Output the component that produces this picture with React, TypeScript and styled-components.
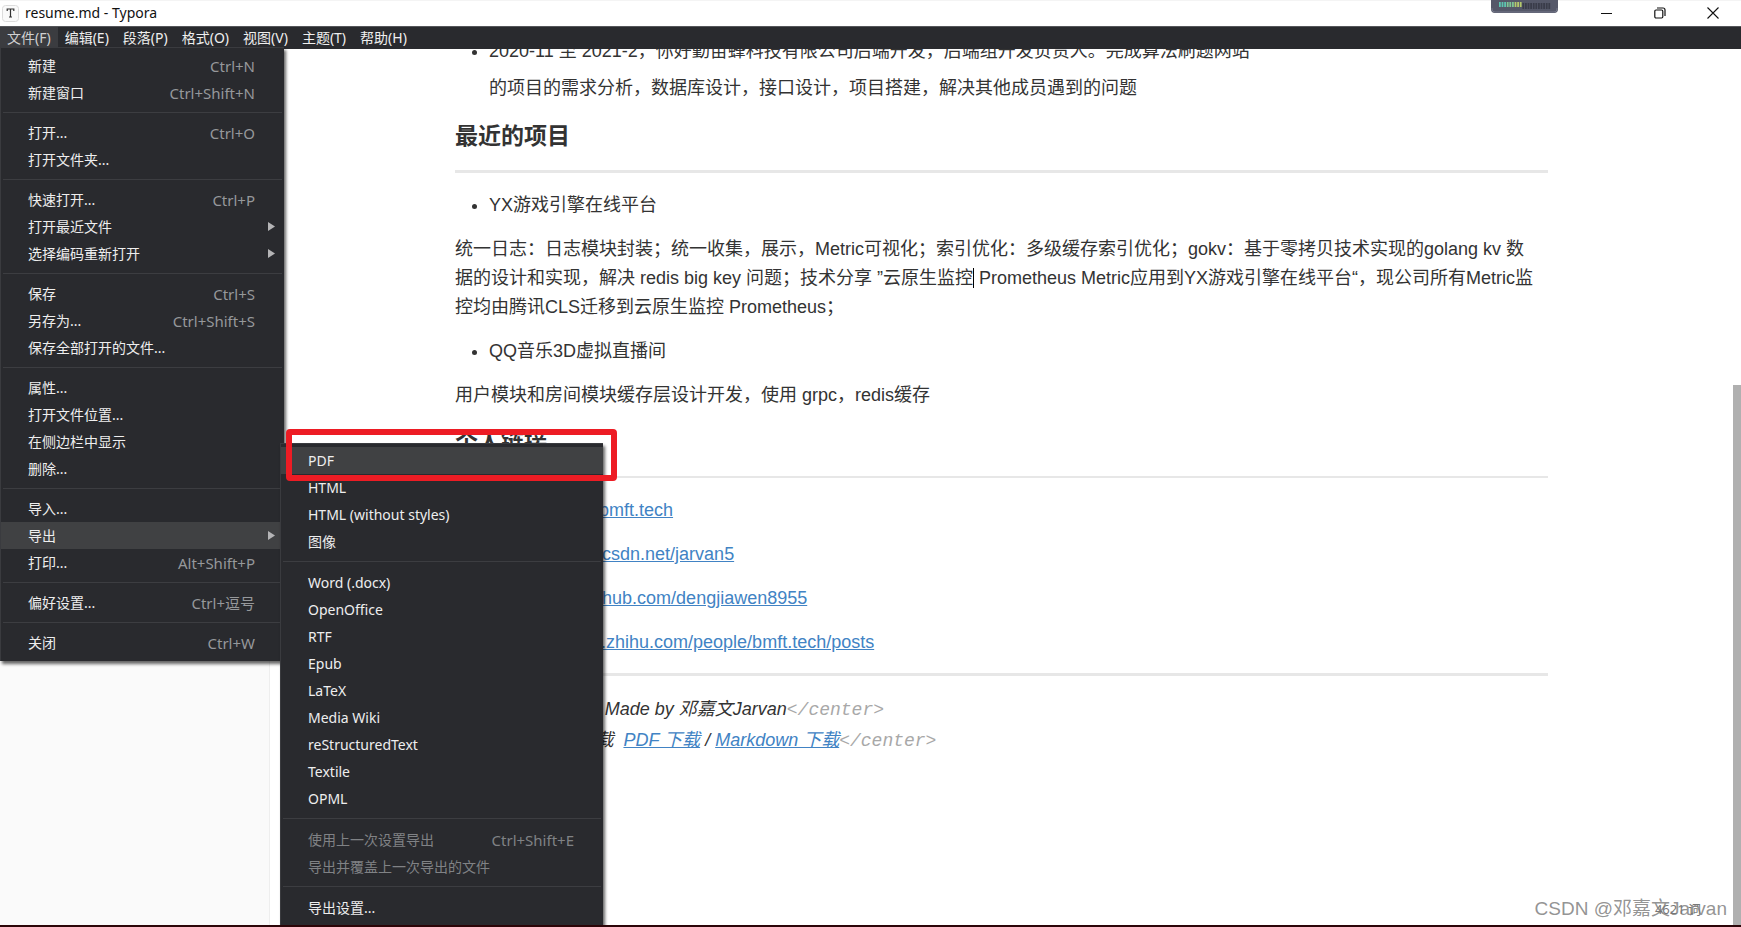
import React from 'react';
import styled, { createGlobalStyle, css } from 'styled-components';

const GlobalStyle = createGlobalStyle`
  * { box-sizing: border-box; }
  html, body, #root { height: 100%; }
  body { margin: 0; overflow: hidden; background: #fff; }
`;

const uiFont = `'Noto Sans', 'Noto Sans CJK SC', sans-serif`;
const docFont = `'Liberation Sans', 'Noto Sans CJK SC', sans-serif`;

const Window = styled.div`
  position: relative;
  height: 100vh;
  display: flex;
  flex-direction: column;
  overflow: hidden;
  border-bottom: 2px solid #2c0508;
  font-family: ${uiFont};
`;

const TitleBar = styled.header`
  position: relative;
  flex: none;
  height: 26px;
  display: flex;
  align-items: center;
  justify-content: space-between;
  padding: 0 2px 1px;
  background: #fff;
  border-top: 1px solid #f4f4f4;
`;

const Title = styled.div`
  display: flex;
  align-items: center;
  gap: 6px;
  font-size: 14px;
  line-height: 20px;
  color: #111;
`;

const WindowControls = styled.div`
  display: flex;
`;

const ControlButton = styled.button`
  width: 53px;
  height: 24px;
  padding: 0;
  border: 0;
  background: transparent;
  display: flex;
  align-items: center;
  justify-content: center;
`;

const Meter = styled.svg`
  position: absolute;
  top: -1px;
  right: 183px;
`;

const MenuBar = styled.nav`
  flex: none;
  height: 23px;
  display: flex;
  background: #292a2e;
  border-top: 1px solid #55565a;
`;

const MenuBarButton = styled.button<{ $open?: boolean }>`
  height: 22px;
  padding: 0 7px;
  border: 0;
  background: ${p => (p.$open ? '#3b3c40' : 'transparent')};
  color: ${p => (p.$open ? '#d0d0d0' : '#efefef')};
  font-family: ${uiFont};
  font-size: 14px;
  line-height: 22px;
`;

const Body = styled.div`
  flex: 1;
  min-height: 0;
  display: flex;
`;

const Sidebar = styled.aside`
  flex: none;
  width: 270px;
  background: #fafafa;
  border-right: 1px solid #eee;
`;

const Editor = styled.main`
  flex: 1;
  min-width: 0;
  overflow: hidden;
  padding: 0 185px;
  background: #fff;
`;

const ScrollTrack = styled.div`
  flex: none;
  width: 8px;
  display: flex;
  flex-direction: column;
  justify-content: flex-end;
  background: #fff;
`;

const ScrollThumb = styled.div`
  height: 61.6%;
  background: #b0b0b0;
`;

const Article = styled.article`
  margin-top: -16px;
  font-family: ${docFont};
  font-size: 18px;
  line-height: 29px;
  color: #333;
`;

const List = styled.ul<{ $loose?: boolean }>`
  margin: 0 0 15px;
  padding-left: 34px;
  ${p => p.$loose && css`
    max-width: 810px;
    margin-bottom: 12px;
    line-height: 37px;
  `}
`;

const Paragraph = styled.p`
  margin: 0 0 15px;
`;

const Heading = styled.h4`
  margin: 0 0 18px;
  padding-top: 1px;
  font-size: 23px;
  line-height: 32px;
  color: #333;
`;

const Rule = styled.hr<{ $thin?: boolean }>`
  height: ${p => (p.$thin ? 2 : 3)}px;
  margin: 16px 0 18px;
  border: 0;
  background: #e7e7e7;
`;

const Link = styled.a`
  color: #4183c4;
  text-decoration: underline;
`;

const Footer = styled.p`
  margin: 0;
  line-height: 30px;
  font-style: italic;
`;

const Tag = styled.span`
  font-family: 'Liberation Mono', monospace;
  color: #a8a8a8;
`;

const Caret = styled.span`
  display: inline-block;
  width: 1px;
  height: 20px;
  vertical-align: -4px;
  background: #000;
`;

const Menu = styled.ul<{ $sub?: boolean }>`
  position: absolute;
  top: ${p => (p.$sub ? 443 : 47)}px;
  left: ${p => (p.$sub ? 280 : 0)}px;
  width: ${p => (p.$sub ? 323 : 284)}px;
  margin: 0;
  padding: ${p => (p.$sub ? '3px 0 5px' : '4px 0 5px')};
  list-style: none;
  background: #292a2e;
  border: 1px solid #3a3b3f;
  border-width: 1px 0 0 1px;
  box-shadow: 2px 3px 3px rgba(0, 0, 0, 0.6);
`;

const MenuItem = styled.button<{ $active?: boolean }>`
  width: 100%;
  height: 27px;
  display: flex;
  align-items: center;
  justify-content: space-between;
  padding: 0 9px 0 27px;
  border: 0;
  background: ${p => (p.$active ? '#404143' : 'transparent')};
  color: #eee;
  font-family: ${uiFont};
  font-size: 14px;
  line-height: 20px;
  text-align: left;
  &:disabled { color: #808285; }
`;

const Shortcut = styled.span`
  margin-right: 20px;
  font-size: 15px;
  color: #96989b;
  button:disabled & { color: #808285; }
`;

const Separator = styled.li<{ $tall?: boolean }>`
  height: 1px;
  margin: ${p => (p.$tall ? '6px 2px 7px' : '6px 2px')};
  background: #3c3d41;
`;

const Highlight = styled.div`
  position: absolute;
  top: 429px;
  left: 286px;
  width: 331px;
  height: 52px;
  border: 6px solid #ed1c24;
  border-radius: 4px;
  pointer-events: none;
`;

const WordCount = styled.div`
  position: absolute;
  right: 40px;
  bottom: 6px;
  font-size: 13px;
  line-height: 20px;
  color: #777;
`;

const Watermark = styled.div`
  position: absolute;
  right: 14px;
  bottom: 2px;
  font-family: ${docFont};
  font-size: 19px;
  line-height: 28px;
  color: rgba(120, 120, 120, 0.8);
`;

type Entry = { label: string; keys?: string; sub?: boolean; active?: boolean; disabled?: boolean };

const menuBar = ['文件(F)', '编辑(E)', '段落(P)', '格式(O)', '视图(V)', '主题(T)', '帮助(H)'];

const fileMenu: Entry[][] = [
  [{ label: '新建', keys: 'Ctrl+N' }, { label: '新建窗口', keys: 'Ctrl+Shift+N' }],
  [{ label: '打开...', keys: 'Ctrl+O' }, { label: '打开文件夹...' }],
  [
    { label: '快速打开...', keys: 'Ctrl+P' },
    { label: '打开最近文件', sub: true },
    { label: '选择编码重新打开', sub: true },
  ],
  [
    { label: '保存', keys: 'Ctrl+S' },
    { label: '另存为...', keys: 'Ctrl+Shift+S' },
    { label: '保存全部打开的文件...' },
  ],
  [{ label: '属性...' }, { label: '打开文件位置...' }, { label: '在侧边栏中显示' }, { label: '删除...' }],
  [
    { label: '导入...' },
    { label: '导出', sub: true, active: true },
    { label: '打印...', keys: 'Alt+Shift+P' },
  ],
  [{ label: '偏好设置...', keys: 'Ctrl+逗号' }],
  [{ label: '关闭', keys: 'Ctrl+W' }],
];

const exportMenu: Entry[][] = [
  [{ label: 'PDF', active: true }, { label: 'HTML' }, { label: 'HTML (without styles)' }, { label: '图像' }],
  [
    { label: 'Word (.docx)' },
    { label: 'OpenOffice' },
    { label: 'RTF' },
    { label: 'Epub' },
    { label: 'LaTeX' },
    { label: 'Media Wiki' },
    { label: 'reStructuredText' },
    { label: 'Textile' },
    { label: 'OPML' },
  ],
  [
    { label: '使用上一次设置导出', keys: 'Ctrl+Shift+E', disabled: true },
    { label: '导出并覆盖上一次导出的文件', disabled: true },
  ],
  [{ label: '导出设置...' }],
];

const links = [
  ['个人网站：', 'https://bmft.tech'],
  ['博客：', 'https://blog.csdn.net/jarvan5'],
  ['GitHub：', 'https://github.com/dengjiawen8955'],
  ['知乎：', 'https://www.zhihu.com/people/bmft.tech/posts'],
];

function DropMenu({ groups, sub }: { groups: Entry[][]; sub?: boolean }) {
  return (
    <Menu $sub={sub}>
      {groups.map((group, i) => (
        <React.Fragment key={i}>
          {i > 0 && <Separator $tall={sub} />}
          {group.map(e => (
            <li key={e.label}>
              <MenuItem $active={e.active} disabled={e.disabled}>
                <span>{e.label}</span>
                {e.keys && <Shortcut>{e.keys}</Shortcut>}
                {e.sub && (
                  <svg width="7" height="9" viewBox="0 0 7 9" aria-hidden="true">
                    <path d="M0 0L7 4.5L0 9Z" fill="#b4b4b6" />
                  </svg>
                )}
              </MenuItem>
            </li>
          ))}
        </React.Fragment>
      ))}
    </Menu>
  );
}

function LevelMeter() {
  const bars = Array.from({ length: 20 }, (_, i) => i);
  return (
    <Meter width="67" height="13" viewBox="0 0 67 13" aria-hidden="true">
      <path d="M0 0H67V9Q67 13 63 13H4Q0 13 0 9Z" fill="#555869" />
      <path d="M1 8V9Q1 12 4 12H63Q66 12 66 9V8" fill="none" stroke="#74778a" />
      {bars.map(i => (
        <rect
          key={i}
          x={8 + i * 2.6}
          y={i < 9 ? 2 : 3}
          width="1.8"
          height={i < 9 ? 5 : 6}
          fill={i < 3 ? '#5cc4b0' : i < 6 ? '#7fc795' : i < 9 ? '#b5c96c' : '#3a3c4a'}
        />
      ))}
    </Meter>
  );
}

export default function App() {
  return (
    <Window>
      <GlobalStyle />
      <TitleBar>
        <Title>
          <svg width="17" height="17" viewBox="0 0 17 17" aria-hidden="true">
            <rect x="0.5" y="0.5" width="16" height="16" rx="3" fill="#fafafa" stroke="#dcdcdc" />
            <path d="M5.2 6V4H11.8V6M8.5 4V12M7 12H10" fill="none" stroke="#333" strokeWidth="1.2" />
          </svg>
          <span>resume.md - Typora</span>
        </Title>
        <LevelMeter />
        <WindowControls>
          <ControlButton aria-label="最小化">
            <svg width="11" height="11" viewBox="0 0 11 11"><path d="M0 5.5H11" stroke="#111" /></svg>
          </ControlButton>
          <ControlButton aria-label="还原">
            <svg width="12" height="12" viewBox="0 0 12 12" fill="none" stroke="#111" strokeWidth="1.2">
              <rect x="0.8" y="3" width="8" height="8" rx="1.2" />
              <path d="M3 1H9Q11 1 11 3V9" />
            </svg>
          </ControlButton>
          <ControlButton aria-label="关闭">
            <svg width="12" height="12" viewBox="0 0 12 12"><path d="M0.5 0.5L11.5 11.5M11.5 0.5L0.5 11.5" stroke="#111" strokeWidth="1.1" /></svg>
          </ControlButton>
        </WindowControls>
      </TitleBar>

      <MenuBar>
        {menuBar.map((label, i) => (
          <MenuBarButton key={label} $open={i === 0}>{label}</MenuBarButton>
        ))}
      </MenuBar>

      <Body>
        <Sidebar />
        <Editor>
          <Article>
            <List $loose>
              <li>2020-11 至 2021-2，你好勤苗蜂科技有限公司后端开发，后端组开发负责人。完成算法刷题网站的项目的需求分析，数据库设计，接口设计，项目搭建，解决其他成员遇到的问题</li>
            </List>
            <Heading>最近的项目</Heading>
            <Rule />
            <List><li>YX游戏引擎在线平台</li></List>
            <Paragraph>
              统一日志：日志模块封装；统一收集，展示，Metric可视化；索引优化：多级缓存索引优化；gokv：基于零拷贝技术实现的golang kv 数
              <br />
              据的设计和实现，解决 redis big key 问题；技术分享 ”云原生监控<Caret /> Prometheus Metric应用到YX游戏引擎在线平台“，现公司所有Metric监
              <br />
              控均由腾讯CLS迁移到云原生监控 Prometheus；
            </Paragraph>
            <List><li>QQ音乐3D虚拟直播间</li></List>
            <Paragraph>用户模块和房间模块缓存层设计开发，使用 grpc，redis缓存</Paragraph>
            <Heading>个人链接</Heading>
            <Rule $thin />
            {links.map(([label, url]) => (
              <Paragraph key={url}>{label}<Link href={url}>{url}</Link></Paragraph>
            ))}
            <Rule />
            <Footer>
              <Tag>&lt;center&gt;</Tag>© 2021 Made by 邓嘉文Jarvan<Tag>&lt;/center&gt;</Tag>
              <br />
              <Tag>&lt;center&gt;</Tag>简历下载&nbsp; <Link href="#pdf">PDF 下载</Link> / <Link href="#markdown">Markdown 下载</Link><Tag>&lt;/center&gt;</Tag>
            </Footer>
          </Article>
        </Editor>
        <ScrollTrack><ScrollThumb /></ScrollTrack>
      </Body>

      <DropMenu groups={fileMenu} />
      <DropMenu groups={exportMenu} sub />
      <Highlight />
      <WordCount>4621 词</WordCount>
      <Watermark>CSDN @邓嘉文Jarvan</Watermark>
    </Window>
  );
}
